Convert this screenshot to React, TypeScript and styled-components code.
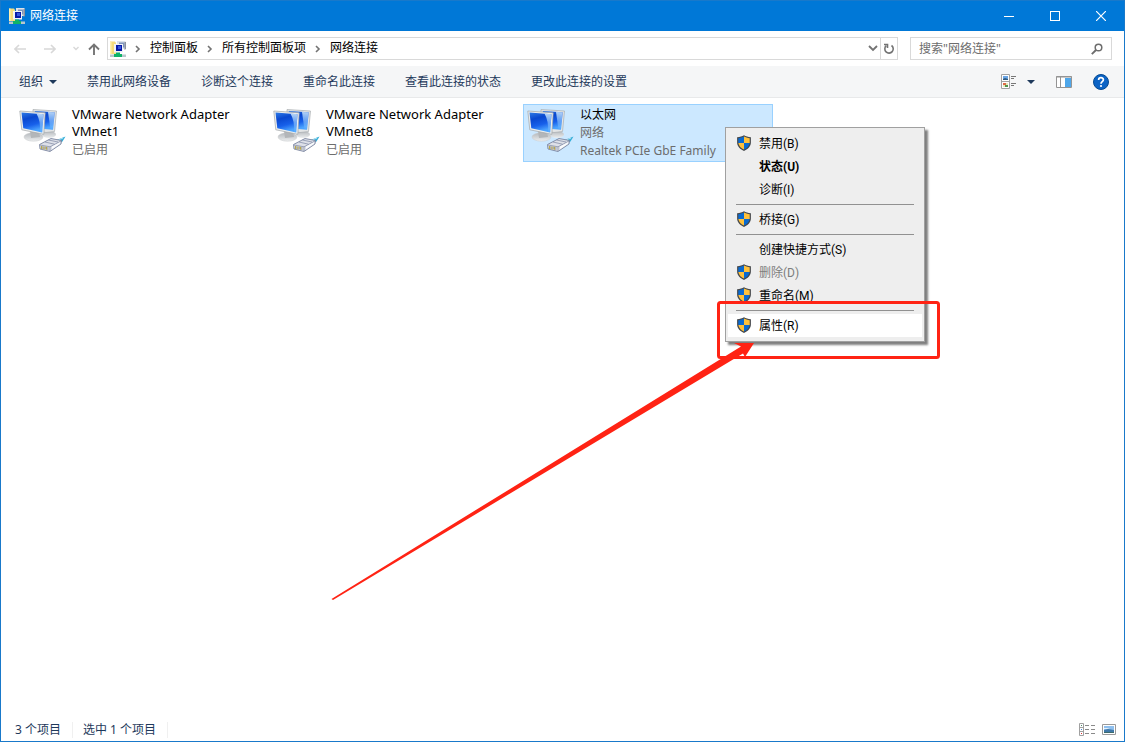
import React from "react";
import styled, { createGlobalStyle } from "styled-components";

const GlobalStyle = createGlobalStyle`
  * { box-sizing: border-box; }
  body {
    margin: 0;
    background: #fff;
    color: #000;
    font: 12px/16px "Noto Sans", "Noto Sans CJK SC", sans-serif;
  }
  button, input {
    margin: 0;
    padding: 0;
    border: 0;
    background: none;
    color: inherit;
    font: inherit;
  }
  svg { display: block; flex: none; }
`;

const Window = styled.div`
  position: relative;
  display: flex;
  flex-direction: column;
  min-height: 100vh;
  border: 1px solid #1979ca;
  overflow: hidden;
`;

const TitleBar = styled.header`
  display: flex;
  align-items: center;
  height: 30px;
  padding-left: 8px;
  background: #0078d7;
  color: #fff;
`;

const Title = styled.h1`
  flex: 1;
  margin: 0 0 0 5px;
  font-size: 12px;
  font-weight: 400;
`;

const CaptionButton = styled.button`
  display: flex;
  align-items: center;
  justify-content: center;
  width: 46px;
  height: 30px;
`;

const AddressRow = styled.div`
  display: flex;
  align-items: center;
  height: 35px;
  padding: 0 12px 0 10px;
`;

const NavButton = styled.button<{ $width: number }>`
  display: flex;
  align-items: center;
  justify-content: center;
  width: ${(p) => p.$width}px;
  height: 22px;
`;

const AddressBar = styled.nav`
  display: flex;
  flex: 1;
  align-items: center;
  height: 23px;
  border: 1px solid #d9d9d9;
  padding-left: 2px;
`;

const Crumb = styled.a`
  padding-bottom: 2px;
  color: #000;
  text-decoration: none;
`;

const CrumbArrow = styled.span`
  display: flex;
  justify-content: center;
  width: 24px;
`;

const Spacer = styled.span`
  flex: 1;
`;

const RefreshButton = styled.button`
  display: flex;
  align-items: center;
  justify-content: center;
  width: 17px;
  height: 21px;
  border-left: 1px solid #d9d9d9;
`;

const SearchBox = styled.label`
  display: flex;
  align-items: center;
  width: 202px;
  height: 23px;
  margin-left: 12px;
  padding: 0 8px;
  border: 1px solid #d9d9d9;
`;

const SearchInput = styled.input`
  flex: 1;
  min-width: 0;
  height: 20px;
  outline: 0;
  &::placeholder { color: #6d6d6d; opacity: 1; }
`;

const CommandBar = styled.div`
  display: flex;
  align-items: center;
  gap: 30px;
  height: 32px;
  padding: 0 15px 0 18px;
  background: #f5f6f7;
  border-bottom: 1px solid #e8e9ea;
  color: #1e395b;
`;

const Command = styled.button`
  display: flex;
  align-items: center;
  gap: 6px;
  white-space: nowrap;
`;

const ViewCommands = styled.div`
  display: flex;
  align-items: center;
  gap: 21px;
  margin-left: auto;
`;

const Content = styled.main`
  flex: 1;
  padding: 6px 0 0 14px;
`;

const Connections = styled.div`
  display: grid;
  grid-template-columns: repeat(auto-fill, 250px);
  gap: 4px;
`;

const Connection = styled.div<{ $selected?: boolean }>`
  display: flex;
  gap: 5px;
  height: 58px;
  padding: 1px 3px;
  border: 1px solid ${(p) => (p.$selected ? "#99d1ff" : "transparent")};
  background: ${(p) => (p.$selected ? "#cce8ff" : "transparent")};
`;

const ConnectionText = styled.div`
  flex: 1;
  min-width: 0;
  line-height: 18px;
`;

const Name = styled.div<{ $lines?: boolean }>`
  padding-bottom: ${(p) => (p.$lines ? 1 : 0)}px;
  font-size: ${(p) => (p.$lines ? 13 : 12)}px;
  line-height: ${(p) => (p.$lines ? 17 : 18)}px;
`;

const Detail = styled.div`
  overflow: hidden;
  color: #6d6d6d;
  white-space: nowrap;
`;

const Menu = styled.div`
  position: absolute;
  left: 724px;
  top: 126px;
  width: 200px;
  padding: 4px 2px;
  border: 1px solid #a0a0a0;
  background: #eee;
  box-shadow: 3px 3px 2px rgba(0, 0, 0, 0.5);
`;

const MenuItem = styled.button<{ $bold?: boolean; $active?: boolean }>`
  display: flex;
  align-items: center;
  gap: 7px;
  width: 100%;
  height: 23px;
  padding-left: 8px;
  background: ${(p) => (p.$active ? "#fff" : "transparent")};
  font-family: Roboto, "Noto Sans CJK SC", sans-serif;
  font-weight: ${(p) => (p.$bold ? 700 : 400)};
  &:disabled { color: #7d7d7d; }
`;

const ShieldSlot = styled.span`
  width: 16px;
  height: 18px;
`;

const Divider = styled.hr`
  height: 1px;
  margin: 3px 8px;
  border: 0;
  background: #919191;
`;

const StatusBar = styled.footer`
  display: flex;
  align-items: center;
  height: 23px;
  padding: 0 8px 0 14px;
  color: #1e395b;
`;

const StatusText = styled.span`
  padding-right: 11px;
  margin-right: 10px;
  border-right: 1px solid #f0f0f0;
`;

const StatusButton = styled.button`
  margin-left: 7px;
`;

const Markup = styled.svg`
  position: absolute;
  left: -1px;
  top: -1px;
  pointer-events: none;
`;

const FolderIcon = () => (
  <svg width="16" height="16" viewBox="0 0 16 16">
    <path d="M0 0.500h5l1 1.500v11H0z" fill="#f5dc7c" />
    <path d="M0 0.500h1.500v12.500H0z" fill="#fff0b0" />
    <path d="M7 0h8l1 1v7H7z" fill="#dde3ea" />
    <path d="M9 1.500h5.500v5H9z" fill="#7f95bd" />
    <path d="M14.500 1H16v7l-1.500 1z" fill="#8c929e" />
    <path d="M4 3h9v8.500H4z" fill="#f1f3f6" />
    <path d="M6 4h6v6H6z" fill="#0719a8" />
    <path d="M8 5h3v3H8z" fill="#3555dc" />
    <path d="M6 11.500h4V13h2v3H4v-3h2z" fill="#0fb368" />
    <path d="M0 13.500h4V16H0zM12 13.500h4V16h-4z" fill="#b9c6cc" />
  </svg>
);

const Chevron = () => (
  <svg width="6" height="8" viewBox="0 0 6 8" fill="none" stroke="#737373" strokeWidth="1.6">
    <path d="M1 1l3 3-3 3" />
  </svg>
);

const Shield = () => (
  <svg width="16" height="16" viewBox="0 0 16 16">
    <path d="M8 0.300C9.800 1.500 12 2.100 14.900 2.200V7.500C14.900 11.500 11.500 14.400 8 15.900C4.500 14.400 1.100 11.500 1.100 7.500V2.200C4 2.100 6.200 1.500 8 0.300Z" fill="#46494c" />
    <path d="M8 1.600V8H2.300V3.200C4.500 3 6.500 2.500 8 1.600Z" fill="#0a6ad0" />
    <path d="M8 1.600V8H13.700V3.200C11.500 3 9.500 2.500 8 1.600Z" fill="#ffc13b" />
    <path d="M2.400 8H8V14.600C5.200 13.300 2.700 11 2.400 8Z" fill="#ffc13b" />
    <path d="M13.600 8H8V14.600C10.800 13.300 13.300 11 13.600 8Z" fill="#0a6ad0" />
  </svg>
);

const AdapterIcon = () => (
  <svg width="48" height="50" viewBox="0 -2 48 50">
    <defs>
      <linearGradient id="screen" x1="0" y1="0" x2="0.300" y2="1">
        <stop offset="0" stopColor="#2f7be6" />
        <stop offset="0.350" stopColor="#0a48cf" />
        <stop offset="0.700" stopColor="#1760ea" />
        <stop offset="1" stopColor="#4ba4ff" />
      </linearGradient>
      <linearGradient id="glare" x1="0" y1="0" x2="0" y2="1">
        <stop offset="0" stopColor="#c9e4fb" stopOpacity="0.900" />
        <stop offset="1" stopColor="#6fb6ff" stopOpacity="0.300" />
      </linearGradient>
      <linearGradient id="stand" x1="0" y1="0" x2="0" y2="1">
        <stop offset="0" stopColor="#b4b8bc" />
        <stop offset="1" stopColor="#eceeef" />
      </linearGradient>
    </defs>
    <ellipse cx="30" cy="26.500" rx="7" ry="3.500" fill="url(#stand)" />
    <path d="M14 1.500L37.500 3L35.500 23.500L27 24.500L14 22Z" fill="#e3e5e6" stroke="#a9adb0" strokeWidth="0.700" />
    <path d="M15.500 3L35.700 4.300L34 21.800L25 21Z" fill="url(#screen)" />
    <path d="M29 3.900L35.700 4.300L34 21.800L31.500 21.500Z" fill="url(#glare)" />
    <ellipse cx="14.500" cy="29" rx="9.500" ry="4.200" fill="url(#stand)" stroke="#c8cbcd" strokeWidth="0.500" />
    <path d="M11 23l9 1 1 5-9 1z" fill="#b3b6b9" />
    <path d="M0.800 3L26.200 4.800L24.800 26.300L2.800 21.800Z" fill="#eceeee" stroke="#a2a6a9" strokeWidth="0.700" />
    <path d="M2.500 4.500L24.500 6.200L23.200 24.400L4.300 20.300Z" fill="url(#screen)" />
    <path d="M17.500 5.600L24.500 6.200L23.200 24.400L21 23.900C21.500 17 20.500 11 17.500 5.600Z" fill="url(#glare)" />
    <path d="M35 33L46.500 28.500L43.500 33.500L38 36.500Z" fill="#38aed8" />
    <path d="M37 33l7-3" stroke="#b5e6f6" strokeWidth="1" />
    <path d="M20.500 36.500L32 30.500L42.500 32.500L42 36L31 43.500L21 41Z" fill="#dde0e8" stroke="#6d7896" strokeWidth="0.800" />
    <path d="M21 37L31 38.800L42 33M31 38.800V43M26 34L35.500 36.200M29.500 32L39 34" fill="none" stroke="#7d87a2" strokeWidth="0.700" />
    <path d="M33 38.500L41 34.200V35.800L33 41.200Z" fill="#fafbfd" />
    <path d="M22.500 38v3M25 38.400v3M27.500 38.800v3" stroke="#b9a84c" strokeWidth="1.200" />
    <path d="M23.800 38.200v2.800M26.300 38.600v2.800M28.900 39v3" stroke="#73777f" strokeWidth="0.600" />
  </svg>
);

const menuGroups = [
  [
    { label: "禁用(B)", shield: true },
    { label: "状态(U)", bold: true },
    { label: "诊断(I)" },
  ],
  [{ label: "桥接(G)", shield: true }],
  [
    { label: "创建快捷方式(S)" },
    { label: "删除(D)", shield: true, disabled: true },
    { label: "重命名(M)", shield: true },
  ],
  [{ label: "属性(R)", shield: true, active: true }],
] as { label: string; shield?: boolean; bold?: boolean; disabled?: boolean; active?: boolean }[][];

export default function App() {
  return (
    <Window>
      <GlobalStyle />
      <TitleBar>
        <FolderIcon />
        <Title>网络连接</Title>
        <CaptionButton aria-label="最小化">
          <svg width="10" height="10" viewBox="0 0 10 10"><path d="M0 5.500H10" stroke="#fff" /></svg>
        </CaptionButton>
        <CaptionButton aria-label="最大化">
          <svg width="10" height="10" viewBox="0 0 10 10"><rect x="0.500" y="0.500" width="9" height="9" fill="none" stroke="#fff" /></svg>
        </CaptionButton>
        <CaptionButton aria-label="关闭">
          <svg width="10" height="10" viewBox="0 0 10 10"><path d="M0 0L10 10M10 0L0 10" stroke="#fff" strokeWidth="1.200" /></svg>
        </CaptionButton>
      </TitleBar>

      <AddressRow>
        <NavButton $width={18} aria-label="后退">
          <svg width="12" height="10" viewBox="0 0 12 10" fill="none" stroke="#d8d8d8" strokeWidth="1.600"><path d="M12 5H1M5 1L1 5l4 4" /></svg>
        </NavButton>
        <NavButton $width={42} aria-label="前进">
          <svg width="12" height="10" viewBox="0 0 12 10" fill="none" stroke="#d8d8d8" strokeWidth="1.600"><path d="M0 5h11M7 1l4 4-4 4" /></svg>
        </NavButton>
        <NavButton $width={10} aria-label="最近浏览的位置">
          <svg width="6" height="5" viewBox="0 0 6 5" fill="none" stroke="#d8d8d8" strokeWidth="1.400"><path d="M0.500 1L3 3.500 5.500 1" /></svg>
        </NavButton>
        <NavButton $width={26} aria-label="上移">
          <svg width="12" height="12" viewBox="0 0 12 12" fill="none" stroke="#757575" strokeWidth="1.900"><path d="M6 12V1.500M1 6.500l5-5 5 5" /></svg>
        </NavButton>
        <AddressBar>
          <FolderIcon />
          <CrumbArrow><Chevron /></CrumbArrow>
          <Crumb href="#">控制面板</Crumb>
          <CrumbArrow><Chevron /></CrumbArrow>
          <Crumb href="#">所有控制面板项</Crumb>
          <CrumbArrow><Chevron /></CrumbArrow>
          <Crumb href="#">网络连接</Crumb>
          <Spacer />
          <NavButton $width={15} aria-label="历史记录">
            <svg width="10" height="7" viewBox="0 0 10 7" fill="none" stroke="#737373" strokeWidth="1.800"><path d="M1 1l4 4 4-4" /></svg>
          </NavButton>
          <RefreshButton aria-label="刷新">
            <svg width="12" height="12" viewBox="0 0 12 12" fill="none" stroke="#737373" strokeWidth="1.600">
              <path d="M8.500 2.500A4.200 4.200 0 1 1 3.300 2.700" />
              <path d="M1 1.500H4.500V5" />
            </svg>
          </RefreshButton>
        </AddressBar>
        <SearchBox>
          <SearchInput aria-label="搜索" placeholder={'搜索"网络连接"'} />
          <svg width="12" height="12" viewBox="0 0 12 12" fill="none" stroke="#6d6d6d"><circle cx="7.500" cy="4.500" r="3.300" strokeWidth="1.500" /><path d="M5 7L0.800 11.200" strokeWidth="1.900" /></svg>
        </SearchBox>
      </AddressRow>

      <CommandBar>
        <Command>
          组织
          <svg width="8" height="4" viewBox="0 0 8 4"><path d="M0 0h8L4 4z" fill="#1e395b" /></svg>
        </Command>
        <Command>禁用此网络设备</Command>
        <Command>诊断这个连接</Command>
        <Command>重命名此连接</Command>
        <Command>查看此连接的状态</Command>
        <Command>更改此连接的设置</Command>
        <ViewCommands>
          <Command aria-label="更改视图">
            <svg width="20" height="16" viewBox="0 0 20 16">
              <path d="M0.500 0.500h8v14h-8zM0.500 7.500h8" fill="#fff" stroke="#a2a2a2" />
              <path d="M2 2h5v4H2z" fill="#6ba6e6" /><path d="M2 5l2-1 3 1v1H2z" fill="#315c81" />
              <path d="M2 9h5v4H2z" fill="#e9e7ba" /><path d="M2 9h3v2H2z" fill="#de6c46" /><path d="M4 11h3v2H4z" fill="#50934d" />
              <path d="M10 2.500h5M10 4.500h3M10 9.500h5M10 11.500h3" stroke="#777" />
            </svg>
            <svg width="8" height="4" viewBox="0 0 8 4"><path d="M0 0h8L4 4z" fill="#1e395b" /></svg>
          </Command>
          <Command aria-label="预览窗格">
            <svg width="16" height="12" viewBox="0 0 16 12">
              <path d="M0.500 0.500h15v11h-15z" fill="#fff" stroke="#949494" />
              <path d="M0 1h16M4.500 1v10" stroke="#949494" />
              <path d="M9 2h6v9H9z" fill="#4fa7ea" />
            </svg>
          </Command>
          <Command aria-label="帮助">
            <svg width="16" height="16" viewBox="0 0 16 16">
              <circle cx="8" cy="8" r="7.500" fill="#0b63c5" stroke="#064a91" />
              <path d="M5.600 6C5.600 2.900 10.400 3 10.400 5.800C10.400 7.600 8 7.700 8 9.800" fill="none" stroke="#fff" strokeWidth="1.700" />
              <circle cx="8" cy="12" r="1.100" fill="#fff" />
            </svg>
          </Command>
        </ViewCommands>
      </CommandBar>

      <Content>
        <Connections>
          {["VMnet1", "VMnet8"].map((net) => (
            <Connection key={net}>
              <AdapterIcon />
              <ConnectionText>
                <Name $lines>VMware Network Adapter<br />{net}</Name>
                <Detail>已启用</Detail>
              </ConnectionText>
            </Connection>
          ))}
          <Connection $selected>
            <AdapterIcon />
            <ConnectionText>
              <Name>以太网</Name>
              <Detail>网络</Detail>
              <Detail>Realtek PCIe GbE Family</Detail>
            </ConnectionText>
          </Connection>
        </Connections>
      </Content>

      <StatusBar>
        <StatusText>3 个项目</StatusText>
        <StatusText>选中 1 个项目</StatusText>
        <Spacer />
        <StatusButton aria-label="详细信息">
          <svg width="16" height="13" viewBox="0 0 16 13">
            <path d="M0.500 0.500h4v12h-4zM0.500 4.500h4M0.500 8.500h4" fill="#fff" stroke="#a0a0a0" />
            <path d="M2 2h1v1H2z" fill="#4d8c68" /><path d="M2 6h1v1H2z" fill="#4488d8" /><path d="M2 10h1v1H2z" fill="#d33" />
            <path d="M6 2.500h4M12 2.500h4M6 6.500h4M12 6.500h4M6 10.500h4M12 10.500h4" stroke="#8a8a8a" />
          </svg>
        </StatusButton>
        <StatusButton aria-label="大图标">
          <svg width="14" height="11" viewBox="0 0 14 11">
            <path d="M0.500 0.500h13v10h-13z" fill="#fff" stroke="#9a9a9a" />
            <path d="M2 2h10v7H2z" fill="#8fc0ef" /><path d="M2 4h3l3 1H2z" fill="#e6f2fb" /><path d="M2 6l4-1 6 1v3H2z" fill="#3f78a8" /><path d="M2 8h10v1H2z" fill="#3c6a6c" />
          </svg>
        </StatusButton>
      </StatusBar>

      <Menu role="menu">
        {menuGroups.map((group, index) => (
          <React.Fragment key={index}>
            {index > 0 && <Divider />}
            {group.map((item) => (
              <MenuItem key={item.label} role="menuitem" $bold={item.bold} $active={item.active} disabled={item.disabled}>
                <ShieldSlot>{item.shield && <Shield />}</ShieldSlot>
                {item.label}
              </MenuItem>
            ))}
          </React.Fragment>
        ))}
      </Menu>

      <Markup width="960" height="620" viewBox="0 0 960 620" aria-hidden="true">
        <rect x="718.500" y="302.500" width="220" height="55" rx="2" fill="none" stroke="#ff2314" strokeWidth="3" />
        <path d="M331.500 599L741 346.500L734 343H754L745 357L743 353.500L333 600Z" fill="#ff2314" />
      </Markup>
    </Window>
  );
}
